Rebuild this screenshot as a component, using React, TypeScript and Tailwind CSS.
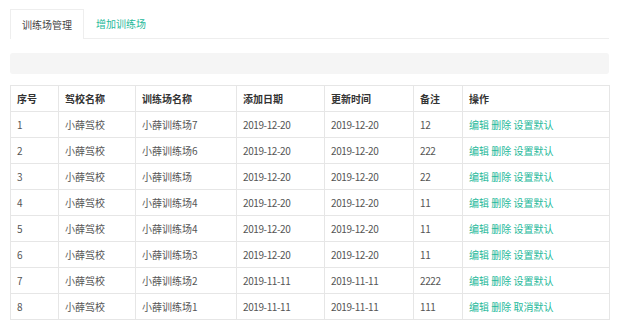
const rows = [
  { id: 1, school: "小薛驾校", field: "小薛训练场7", added: "2019-12-20", updated: "2019-12-20", note: "12", def: "设置默认" },
  { id: 2, school: "小薛驾校", field: "小薛训练场6", added: "2019-12-20", updated: "2019-12-20", note: "222", def: "设置默认" },
  { id: 3, school: "小薛驾校", field: "小薛训练场", added: "2019-12-20", updated: "2019-12-20", note: "22", def: "设置默认" },
  { id: 4, school: "小薛驾校", field: "小薛训练场4", added: "2019-12-20", updated: "2019-12-20", note: "11", def: "设置默认" },
  { id: 5, school: "小薛驾校", field: "小薛训练场4", added: "2019-12-20", updated: "2019-12-20", note: "11", def: "设置默认" },
  { id: 6, school: "小薛驾校", field: "小薛训练场3", added: "2019-12-20", updated: "2019-12-20", note: "11", def: "设置默认" },
  { id: 7, school: "小薛驾校", field: "小薛训练场2", added: "2019-11-11", updated: "2019-11-11", note: "2222", def: "设置默认" },
  { id: 8, school: "小薛驾校", field: "小薛训练场1", added: "2019-11-11", updated: "2019-11-11", note: "111", def: "取消默认" },
];

const headers = ["序号", "驾校名称", "训练场名称", "添加日期", "更新时间", "备注", "操作"];
const widths = ["w-[48px]", "w-[77px]", "w-[101px]", "w-[88px]", "w-[89px]", "w-[49px]", "w-[147px]"];

const cell = "border border-[#e6e6e6] px-[6px] h-[26px] text-left align-middle";
const num = `${cell} tracking-[-0.4px]`;

const App = () => {
  return (
    <div
      className="min-h-[331px] bg-white px-[10px] pt-[9px] text-[10px] text-[#555]"
      style={{ fontFamily: '"Noto Sans CJK SC", "Noto Sans", sans-serif' }}
    >
      <nav className="flex border-b border-[#eee] h-[30px]">
        <span className="flex items-center px-[11px] border border-b-0 border-[#eee] bg-white text-[#444] h-[30px]">
          训练场管理
        </span>
        <span className="flex items-center px-[12px] text-[#26b99a]">增加训练场</span>
      </nav>

      <div className="mt-[14px] h-[21px] rounded-[3px] bg-[#f5f5f5]" />

      <table className="mt-[11px] w-[599px] border-collapse table-fixed">
        <thead>
          <tr>
            {headers.map((h, i) => (
              <th key={h} className={`${cell} ${widths[i]} font-bold text-[#333]`}>
                {h}
              </th>
            ))}
          </tr>
        </thead>
        <tbody>
          {rows.map((r) => (
            <tr key={r.id}>
              <td className={num}>{r.id}</td>
              <td className={cell}>{r.school}</td>
              <td className={cell}>{r.field}</td>
              <td className={num}>{r.added}</td>
              <td className={num}>{r.updated}</td>
              <td className={num}>{r.note}</td>
              <td className={`${cell} text-[#26b99a]`}>
                <span>编辑</span> <span>删除</span> <span>{r.def}</span>
              </td>
            </tr>
          ))}
        </tbody>
      </table>
    </div>
  );
};

export default App;
